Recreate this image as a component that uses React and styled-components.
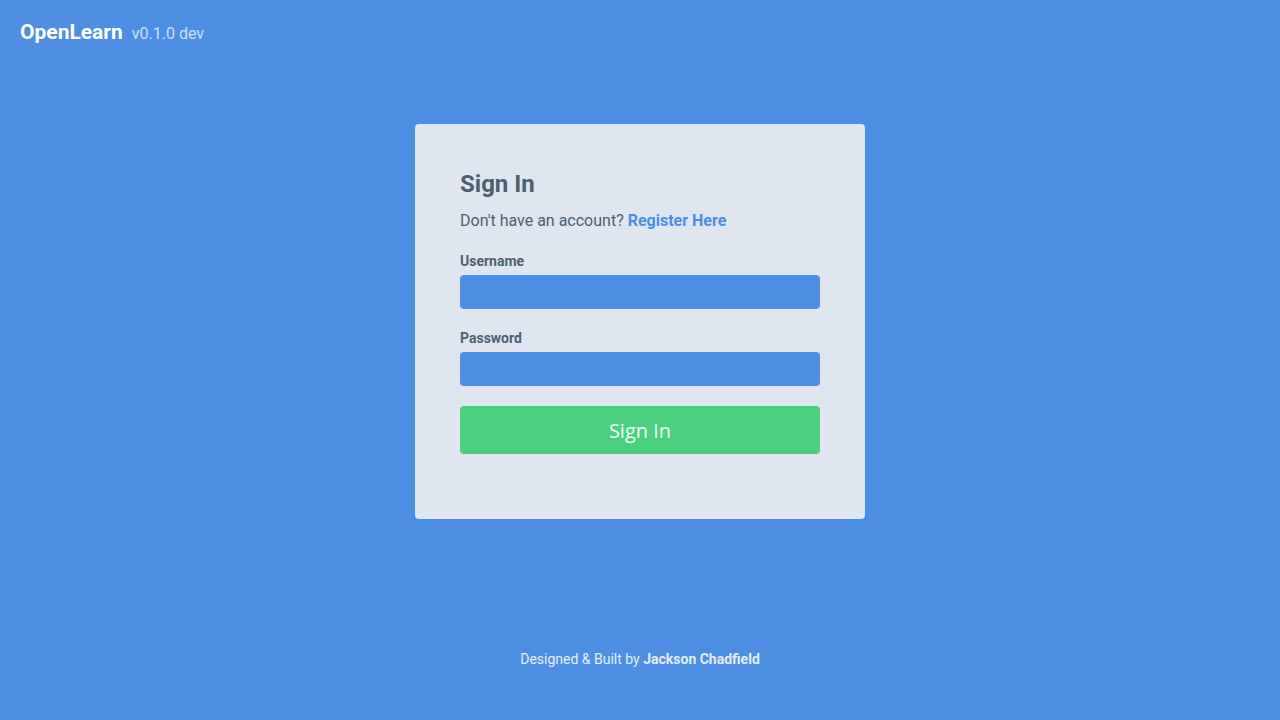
import styled, { createGlobalStyle } from "styled-components";

const GlobalStyle = createGlobalStyle`
  html, body {
    margin: 0;
    padding: 0;
    height: 100%;
  }
  body {
    background: #4e8fe3;
    font-family: Roboto, "Liberation Sans", sans-serif;
  }
  #root {
    min-height: 100vh;
  }
`;

export default function App() {
  return (
    <>
      <GlobalStyle />
      <Page>
        <Header>
          <Brand>OpenLearn</Brand>
          <Version>v0.1.0 dev</Version>
        </Header>

        <Main>
          <Card>
            <Title>Sign In</Title>
            <Sub>
              Don't have an account? <RegisterLink href="#">Register Here</RegisterLink>
            </Sub>

            <Field $top={22}>
              <Label>Username</Label>
              <Input type="text" />
            </Field>
            <Field $top={21}>
              <Label>Password</Label>
              <Input type="password" />
            </Field>

            <Button>Sign In</Button>
          </Card>
        </Main>

        <Footer>
          Designed &amp; Built by <strong>Jackson Chadfield</strong>
        </Footer>
      </Page>
    </>
  );
}

// ----------------------- Styled Components -----------------------
const Page = styled.div`
  display: flex;
  flex-direction: column;
  min-height: 100vh;
`;

const Header = styled.header`
  display: flex;
  align-items: baseline;
  gap: 9px;
  height: 64px;
  box-sizing: border-box;
  padding: 20px 20px 0;
`;

const Brand = styled.span`
  color: #ffffff;
  font-size: 21px;
  font-weight: 700;
  line-height: 24px;
`;

const Version = styled.span`
  color: #cfe0f6;
  font-size: 16px;
`;

const Main = styled.main`
  flex: 1;
  display: flex;
  justify-content: center;
  align-items: flex-start;
  padding-top: 60px;
`;

const Card = styled.div`
  width: 450px;
  box-sizing: border-box;
  padding: 46px 45px 65px;
  background: #dfe6ef;
  border-radius: 4px;
  display: flex;
  flex-direction: column;
`;

const Title = styled.h1`
  margin: 0;
  font-size: 24px;
  line-height: 28px;
  font-weight: 700;
  color: #4d5f73;
`;

const Sub = styled.p`
  margin: 13px 0 0;
  font-size: 16px;
  line-height: 20px;
  color: #4d5f73;
`;

const RegisterLink = styled.a`
  color: #4a8ee0;
  font-weight: 700;
  text-decoration: none;
`;

const Field = styled.div`
  display: flex;
  flex-direction: column;
  gap: 5px;
  margin-top: ${(p) => p.$top}px;
`;

const Label = styled.label`
  font-size: 14px;
  line-height: 17px;
  font-weight: 700;
  color: #4d5f73;
`;

const Input = styled.input`
  height: 34px;
  box-sizing: border-box;
  border: none;
  border-radius: 4px;
  background: #4e8fe3;
  padding: 0 10px;
  color: #ffffff;
  font-size: 16px;
  outline: none;
`;

const Button = styled.button`
  margin-top: 20px;
  height: 48px;
  border: none;
  border-radius: 4px;
  background: #4ad07e;
  color: #f2fbf4;
  font-family: "Open Sans", "Noto Sans", sans-serif;
  font-size: 20px;
  cursor: pointer;
`;

const Footer = styled.footer`
  text-align: center;
  color: #e3edf9;
  font-size: 14px;
  line-height: 16px;
  padding-bottom: 53px;

  strong {
    font-weight: 700;
  }
`;
